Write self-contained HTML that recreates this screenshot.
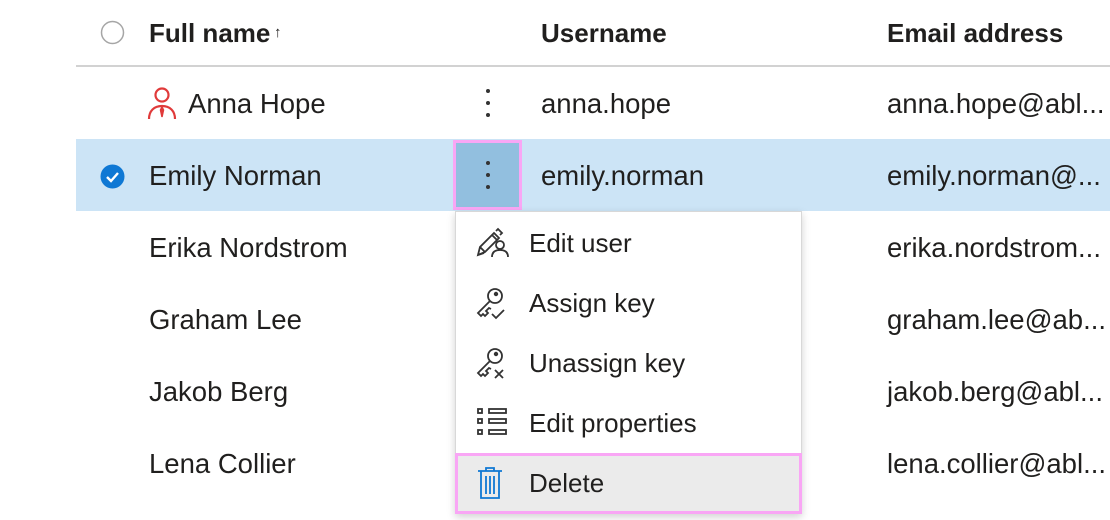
<!DOCTYPE html>
<html><head><meta charset="utf-8"><style>
*{margin:0;padding:0;box-sizing:border-box}
body{width:1110px;height:520px;background:#fff;position:relative;overflow:hidden;font-family:"Segoe UI","Liberation Sans",sans-serif;color:#201f1e}
.t{position:absolute;font-size:27.5px;line-height:30px;white-space:nowrap}
.h{font-weight:bold;font-size:26px}
.m{position:absolute;left:529px;font-size:26px;line-height:30px;white-space:nowrap}
svg{position:absolute}
</style></head><body>
<svg style="left:100px;top:20px" width="25" height="25"><circle cx="12.5" cy="12.5" r="11" fill="none" stroke="#a6a6a6" stroke-width="1.5"/></svg>
<div class="t h" style="left:149px;top:18px">Full name</div>
<div class="t" style="left:274px;top:18px;font-size:15px">↑</div>
<div class="t h" style="left:541px;top:18px">Username</div>
<div class="t h" style="left:887px;top:18px">Email address</div>
<div style="position:absolute;left:76px;top:65px;width:1034px;height:2px;background:#d2d2d2"></div>

<svg style="left:147px;top:86px" width="30" height="34" viewBox="0 0 30 34" fill="none" stroke="#e03a3a" stroke-width="2.2"><circle cx="15" cy="9" r="6.5"/><path d="M2 33c0-8 5-13 13-13s13 5 13 13"/><path d="M15 21l-1.5 3 1.5 7 1.5-7z" fill="#e03a3a" stroke-width="1.5"/></svg>
<div class="t" style="left:188px;top:89px">Anna Hope</div>
<div class="t" style="left:541px;top:89px">anna.hope</div>
<div class="t" style="left:887px;top:89px">anna.hope@abl...</div>
<svg style="left:482px;top:88px" width="12" height="32"><circle cx="6" cy="3" r="2" fill="#333"/><circle cx="6" cy="15" r="2" fill="#333"/><circle cx="6" cy="27" r="2" fill="#333"/></svg>

<div style="position:absolute;left:76px;top:139px;width:1034px;height:72px;background:#cce4f6"></div>
<div style="position:absolute;left:453px;top:140px;width:69px;height:70px;background:#92bfdf;border:3px solid #f9a6f5"></div>
<svg style="left:482px;top:160px" width="12" height="32"><circle cx="6" cy="3" r="2" fill="#333"/><circle cx="6" cy="15" r="2" fill="#333"/><circle cx="6" cy="27" r="2" fill="#333"/></svg>
<svg style="left:100px;top:164px" width="25" height="25"><circle cx="12.5" cy="12.5" r="12" fill="#0f78d4"/><path d="M7 13l4 4 7-8" fill="none" stroke="#fff" stroke-width="2.4"/></svg>
<div class="t" style="left:149px;top:161px">Emily Norman</div>
<div class="t" style="left:541px;top:161px">emily.norman</div>
<div class="t" style="left:887px;top:161px">emily.norman@...</div>

<div class="t" style="left:149px;top:233px">Erika Nordstrom</div>
<div class="t" style="left:887px;top:233px">erika.nordstrom...</div>
<div class="t" style="left:149px;top:305px">Graham Lee</div>
<div class="t" style="left:887px;top:305px">graham.lee@ab...</div>
<div class="t" style="left:149px;top:377px">Jakob Berg</div>
<div class="t" style="left:887px;top:377px">jakob.berg@abl...</div>
<div class="t" style="left:149px;top:449px">Lena Collier</div>
<div class="t" style="left:887px;top:449px">lena.collier@abl...</div>

<div style="position:absolute;left:455px;top:211px;width:347px;height:303px;background:#fff;border:1px solid #d8d8d8;box-shadow:0 3px 8px rgba(0,0,0,.18)"></div>
<div style="position:absolute;left:455px;top:453px;width:347px;height:61px;background:#ebebeb;border:3px solid #f9a6f5"></div>

<svg style="left:475px;top:226px" width="34" height="34" viewBox="0 0 34 34" fill="none" stroke="#333" stroke-width="1.8"><path d="M3 29l2-8L19 7l5 5-14 14z M5 21l5 5 M17 9l5 5 M3 29l6-2"/><path d="M21 5l2-2 4 4-2 2"/><circle cx="25" cy="19" r="4"/><path d="M17 31c0-5 3-7 8-7s8 2 8 7"/></svg>
<div class="m" style="top:228px">Edit user</div>
<svg style="left:475px;top:286px" width="34" height="34" viewBox="0 0 34 34" fill="none" stroke="#333" stroke-width="1.8"><circle cx="20" cy="10" r="7"/><circle cx="21" cy="8" r="1.3" fill="#333"/><path d="M15 15L3 27l3 3 2-2 2 2 3-3-2-2 3-3 2 1"/><path d="M17 28l4 4 8-8"/></svg>
<div class="m" style="top:288px">Assign key</div>
<svg style="left:475px;top:346px" width="34" height="34" viewBox="0 0 34 34" fill="none" stroke="#333" stroke-width="1.8"><circle cx="20" cy="10" r="7"/><circle cx="21" cy="8" r="1.3" fill="#333"/><path d="M15 15L3 27l3 3 2-2 2 2 3-3-2-2 3-3 2 1"/><path d="M20 24l8 8M28 24l-8 8"/></svg>
<div class="m" style="top:348px">Unassign key</div>
<svg style="left:476px;top:407px" width="32" height="32" viewBox="0 0 32 32" fill="none" stroke="#333" stroke-width="1.8"><rect x="2" y="2" width="4" height="4"/><rect x="2" y="12" width="4" height="4"/><rect x="2" y="23" width="4" height="4"/><rect x="13" y="2" width="17" height="4"/><rect x="13" y="12" width="17" height="4"/><rect x="13" y="23" width="17" height="4"/></svg>
<div class="m" style="top:408px">Edit properties</div>
<svg style="left:476px;top:466px" width="28" height="34" viewBox="0 0 28 34" fill="none" stroke="#0f78d4" stroke-width="1.8"><path d="M2 5h24M10 5V2h8v3M5 5v27h18V5M10 10v18M14 10v18M18 10v18"/></svg>
<div class="m" style="top:468px">Delete</div>
</body></html>
